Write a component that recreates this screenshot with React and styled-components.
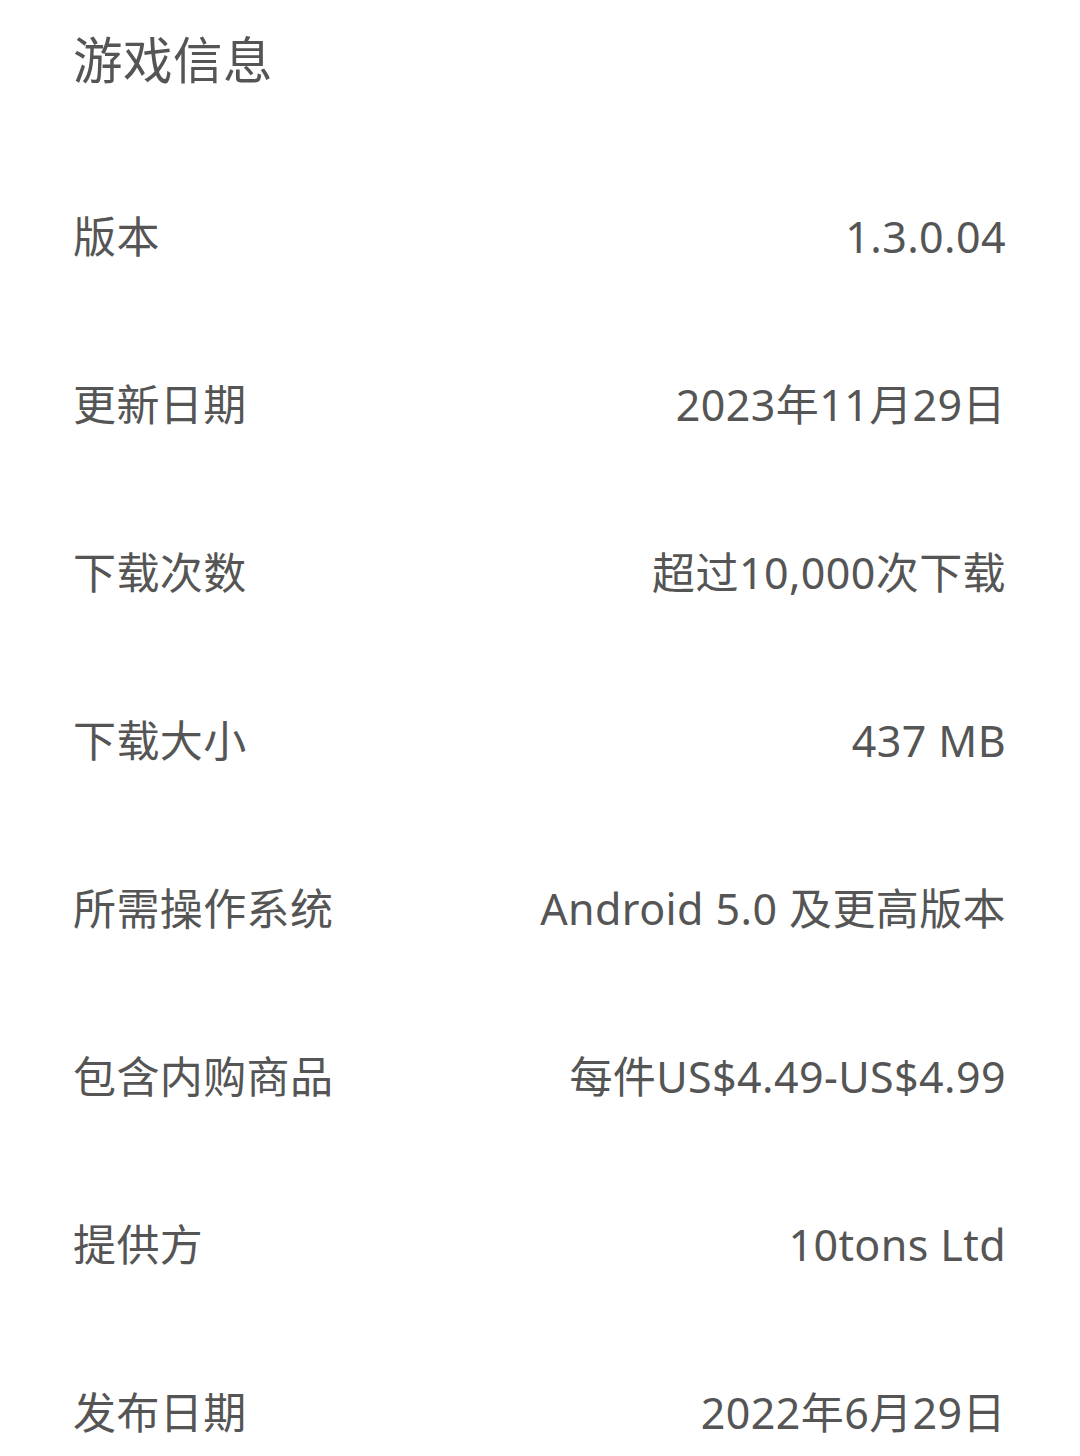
import React from "react";
import styled, { createGlobalStyle } from "styled-components";

const GlobalStyle = createGlobalStyle`
  html, body {
    margin: 0;
    padding: 0;
    background: #fff;
  }
  body {
    font-family: "Noto Sans", "Noto Sans CJK SC", sans-serif;
  }
`;

const rows = [
  { label: "版本", value: "1.3.0.04" },
  { label: "更新日期", value: "2023年11月29日" },
  { label: "下载次数", value: "超过10,000次下载" },
  { label: "下载大小", value: "437 MB" },
  { label: "所需操作系统", value: "Android 5.0 及更高版本" },
  { label: "包含内购商品", value: "每件US$4.49-US$4.99" },
  { label: "提供方", value: "10tons Ltd" },
  { label: "发布日期", value: "2022年6月29日" },
];

function App() {
  return (
    <Page>
      <GlobalStyle />
      <Title>游戏信息</Title>
      <List>
        {rows.map((r) => (
          <Row key={r.label}>
            <Label>{r.label}</Label>
            <Value>{r.value}</Value>
          </Row>
        ))}
      </List>
    </Page>
  );
}

const Page = styled.div`
  width: 1080px;
  height: 1456px;
  overflow: hidden;
  box-sizing: border-box;
  padding: 0 74px 0 73px;
  color: #555;
`;

const Title = styled.div`
  height: 122px;
  display: flex;
  align-items: center;
  font-size: 49.5px;
  letter-spacing: 0.5px;
  line-height: 1;
  color: #555;
`;

const List = styled.div`
  padding-top: 30px;
  display: flex;
  flex-direction: column;
`;

const Row = styled.div`
  height: 168px;
  display: flex;
  align-items: center;
  justify-content: space-between;
  font-size: 43px;
  letter-spacing: 0.4px;
  line-height: 1;
`;

const Label = styled.span`
  color: #555;
`;

const Value = styled.span`
  color: #555;
  text-align: right;
`;

export default App;
